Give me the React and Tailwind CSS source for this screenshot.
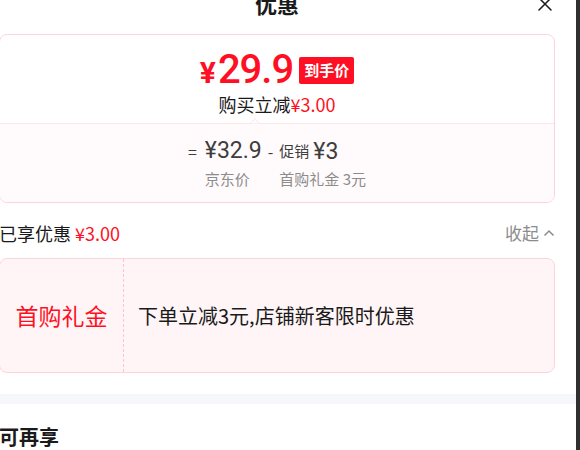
export default function App() {
  return (
    <div className="flex w-[580px] h-[450px] overflow-hidden bg-white font-['Noto_Sans_CJK_SC',sans-serif] text-[#1a1a1a]">
      <div className="w-[576px] h-full overflow-hidden">
        <div className="ml-[-22px] w-[598px]">
          {/* header */}
          <div className="relative h-[26px] -mt-[10px] flex items-center justify-center">
            <span className="text-[22px] font-bold leading-[26px]">优惠</span>
            <svg className="absolute right-[23px] top-[6px] w-[16px] h-[16px]" viewBox="0 0 16 16" fill="none" stroke="#1a1a1a" strokeWidth="1.5" strokeLinecap="round">
              <path d="M2 2l12 12M14 2L2 14" />
            </svg>
          </div>

          {/* price card */}
          <div className="mx-[21px] mt-[18px] border border-[#ffd3de] rounded-[8px] overflow-hidden">
            <div className="relative h-[88px] flex flex-col items-center pt-[15px]">
              <div className="flex items-center h-[40px]">
                <span className="text-[#ff0f23] font-['Roboto',sans-serif] font-bold text-[30px] leading-none mt-[6px]">¥</span>
                <span className="text-[#ff0f23] font-['Roboto',sans-serif] font-medium text-[40px] leading-none ml-[2px] tracking-[-1px]">29.9</span>
                <span className="ml-[6px] h-[27px] px-[5px] flex items-center bg-[#ff0f23] text-white text-[15px] font-bold rounded-[2px]">到手价</span>
              </div>
              <div className="mt-[3px] text-[18px] leading-[22px]">
                购买立减<span className="text-[#ff0f23]">¥3.00</span>
              </div>
              <div className="absolute bottom-[-1px] left-[250px] w-[10px] h-[6px]">
                <svg viewBox="0 0 10 6" className="w-[10px] h-[6px]">
                  <path d="M0 6L5 0.5L10 6Z" fill="#fffafb" stroke="#ffe3ea" strokeWidth="1" />
                </svg>
              </div>
            </div>
            <div className="h-[79px] bg-[#fffafb] border-t border-[#ffe3ea] flex justify-center pt-[16px] text-[#3d3d3d]">
              <div className="flex items-start">
                <span className="text-[16px] leading-[22px] mr-[8px]">=</span>
                <div className="flex flex-col items-start">
                  <span className="font-['Roboto',sans-serif] text-[23px] leading-[22px]">¥32.9</span>
                  <span className="mt-[9px] text-[15px] leading-none text-[#8c8c8c]">京东价</span>
                </div>
                <span className="text-[16px] leading-[22px] mx-[6px]">-</span>
                <div className="flex flex-col items-start">
                  <div className="flex items-center h-[22px]">
                    <span className="text-[15px]">促销</span>
                    <span className="font-['Roboto',sans-serif] text-[23px] leading-none ml-[4px]">¥3</span>
                  </div>
                  <span className="mt-[9px] text-[15px] leading-none text-[#8c8c8c]">首购礼金 3元</span>
                </div>
              </div>
            </div>
          </div>

          {/* enjoyed row */}
          <div className="mx-[21px] mt-[19px] h-[22px] flex items-center justify-between">
            <div className="text-[18px]">
              已享优惠 <span className="text-[#ff0f23]">¥3.00</span>
            </div>
            <div className="flex items-center text-[17px] text-[#8c8c8c]">
              收起
              <svg className="ml-[4px] w-[12px] h-[12px]" viewBox="0 0 12 12" fill="none" stroke="#8c8c8c" strokeWidth="1.5">
                <path d="M1.5 8.5L6 4l4.5 4.5" />
              </svg>
            </div>
          </div>

          {/* coupon card */}
          <div className="mx-[21px] mt-[14px] h-[115px] flex border border-[#ffd3de] rounded-[8px] bg-[#fff5f7]">
            <div className="w-[124px] flex items-center justify-center border-r border-dashed border-[#ffc2d0]">
              <span className="text-[#ff0f23] text-[23px]">首购礼金</span>
            </div>
            <div className="flex items-center pl-[14px] text-[20px]">下单立减3元,店铺新客限时优惠</div>
          </div>

          <div className="mt-[21px] h-[10px] bg-[#f6f7fa]"></div>

          <div className="mx-[21px] mt-[18px] text-[20px] font-bold">可再享</div>
        </div>
      </div>
      <div className="w-[4px] h-full bg-[#303030]"></div>
    </div>
  );
}
